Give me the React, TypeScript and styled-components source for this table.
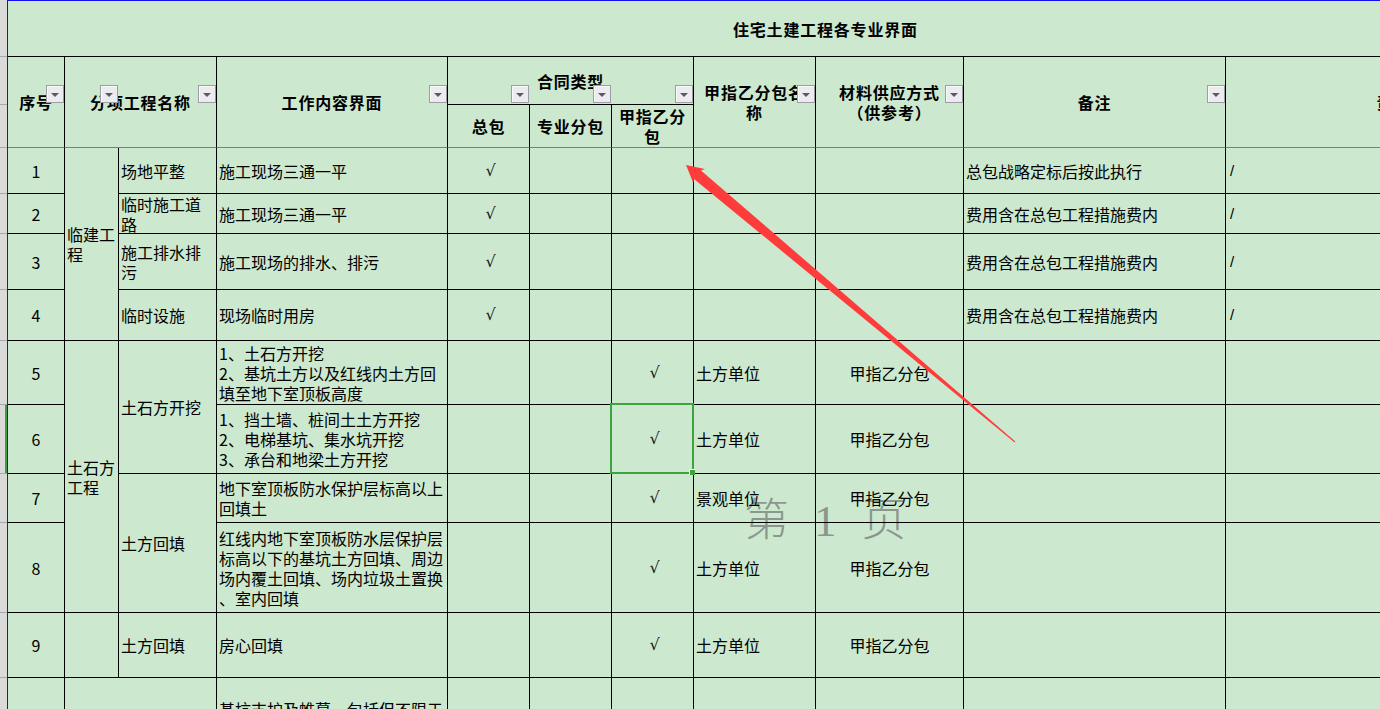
import React from "react";
import styled, { createGlobalStyle } from "styled-components";

const GlobalStyle = createGlobalStyle`
  html, body { margin: 0; padding: 0; background: #cce8cf; overflow: hidden; }
  body { font-family: "Noto Sans CJK SC", "Noto Sans", sans-serif; color: #000; }
  #root { width: 1380px; height: 709px; overflow: hidden; }
`;

const COLS = [57, 54, 98, 231, 82, 82, 82, 122, 148, 262, 369];
const ROWS = [56, 48, 43, 46, 40, 56, 51, 64, 69, 49, 90, 65, 102];
const SHEET_LEFT = 8;
const colStarts: number[] = [];
{
  let acc = SHEET_LEFT;
  COLS.forEach((w) => {
    colStarts.push(acc);
    acc += w;
  });
  colStarts.push(acc);
}

const Page = styled.div`
  position: relative;
  display: flex;
  align-items: flex-start;
  width: 1380px;
  height: 709px;
  overflow: hidden;
  background: #cce8cf;
`;

const RowHeaders = styled.div`
  flex: none;
  width: 7px;
  display: grid;
  grid-template-rows: ${[ROWS[0] + 1, ...ROWS.slice(1)].map((h) => `${h}px`).join(" ")};
  background: #dadada;
`;

const RowTick = styled.div<{ $active?: boolean }>`
  box-sizing: border-box;
  border-bottom: 1px solid #a8a8a8;
  box-shadow: ${(p) => (p.$active ? "inset -2px 0 0 #3f9d3f" : "none")};
`;

const Sheet = styled.div`
  flex: none;
  display: grid;
  grid-template-columns: ${COLS.map((w) => `${w}px`).join(" ")};
  grid-template-rows: ${ROWS.map((h) => `${h}px`).join(" ")};
  border-left: 1px solid #1010f0;
  border-top: 1px solid #1010f0;
`;

const GridCell = styled.div<{ $r: number; $c: number; $rs: number; $cs: number }>`
  grid-row: ${(p) => p.$r} / span ${(p) => p.$rs};
  grid-column: ${(p) => p.$c} / span ${(p) => p.$cs};
  position: relative;
  box-sizing: border-box;
  min-width: 0;
  min-height: 0;
  display: flex;
  align-items: center;
  white-space: pre;
  font-size: 16px;
  line-height: 20px;
`;

const TitleCell = styled(GridCell)`
  border-bottom: 1px solid #000;
  padding-left: 725px;
  font-weight: 700;
  letter-spacing: 0.8px;
`;

const HeaderCell = styled(GridCell)<{ $freeze?: boolean }>`
  justify-content: center;
  text-align: center;
  border-right: 1px solid #000;
  border-bottom: 1px solid ${(p) => (p.$freeze ? "#4ba04b" : "#000")};
  font-weight: 700;
  letter-spacing: 0.8px;
`;

const BodyCell = styled(GridCell)<{ $center?: boolean }>`
  justify-content: ${(p) => (p.$center ? "center" : "flex-start")};
  text-align: ${(p) => (p.$center ? "center" : "left")};
  border-right: 1px solid #000;
  border-bottom: 1px solid #000;
  padding: 0 2px;
`;

const Check = styled.span`
  font-family: "DejaVu Sans", sans-serif;
  font-size: 16px;
  line-height: 16px;
  font-weight: 400;
  color: #111;
  transform: translateX(2px);
`;

const Slash = styled.span`
  font-family: "Liberation Sans", sans-serif;
  font-size: 15px;
  padding-left: 2px;
`;

const FilterButton = styled.span<{ $left: number }>`
  position: absolute;
  top: 28px;
  left: ${(p) => p.$left}px;
  z-index: 2;
  width: 18px;
  height: 18px;
  box-sizing: border-box;
  border: 1px solid #9d9da6;
  background: #ececf0;
  box-shadow: inset 1px 1px 0 #fafafa;
  display: flex;
  align-items: center;
  justify-content: center;
  &::after {
    content: "";
    margin-top: 1px;
    border-left: 4px solid transparent;
    border-right: 4px solid transparent;
    border-top: 4px solid #5a5a62;
  }
`;

const Selection = styled.div`
  position: absolute;
  left: -2px;
  top: -2px;
  right: -1px;
  bottom: -1px;
  z-index: 3;
  border: 2px solid #3ca43c;
  pointer-events: none;
`;

const FillHandle = styled.span`
  position: absolute;
  right: -3px;
  bottom: -3px;
  width: 6px;
  height: 6px;
  box-sizing: border-box;
  background: #3ca43c;
  border-left: 1px solid #fff;
  border-top: 1px solid #fff;
`;

const Watermark = styled.div`
  position: absolute;
  left: 744px;
  top: 499px;
  display: flex;
  gap: 25px;
  font-family: "Liberation Serif", "Noto Sans CJK SC", serif;
  font-size: 45px;
  line-height: 45px;
  font-weight: 300;
  color: rgba(95, 95, 95, 0.6);
  pointer-events: none;
`;

const ArrowLayer = styled.svg`
  position: absolute;
  left: 0;
  top: 0;
  z-index: 5;
  pointer-events: none;
`;

type Header = { r: number; c: number; rs: number; cs: number; text: string; freeze?: boolean; filters?: boolean };

const headers: Header[] = [
  { r: 2, c: 1, rs: 2, cs: 1, text: "序号", freeze: true, filters: true },
  { r: 2, c: 2, rs: 2, cs: 2, text: "分项工程名称", freeze: true, filters: true },
  { r: 2, c: 4, rs: 2, cs: 1, text: "工作内容界面", freeze: true, filters: true },
  { r: 2, c: 5, rs: 1, cs: 3, text: "合同类型", filters: true },
  { r: 3, c: 5, rs: 1, cs: 1, text: "总包", freeze: true },
  { r: 3, c: 6, rs: 1, cs: 1, text: "专业分包", freeze: true },
  { r: 3, c: 7, rs: 1, cs: 1, text: "甲指乙分\n包", freeze: true },
  { r: 2, c: 8, rs: 2, cs: 1, text: "甲指乙分包名\n称", freeze: true, filters: true },
  { r: 2, c: 9, rs: 2, cs: 1, text: "材料供应方式\n（供参考）", freeze: true, filters: true },
  { r: 2, c: 10, rs: 2, cs: 1, text: "备注", freeze: true, filters: true },
  { r: 2, c: 11, rs: 2, cs: 1, text: "责任界面", freeze: true, filters: true },
];

type Body = { r: number; c: number; rs?: number; cs?: number; text?: string; center?: boolean; check?: boolean; slash?: boolean; selected?: boolean };

const CHECK = "√";
const FEE = "费用含在总包工程措施费内";

const rowsData: Body[][] = [
  [
    { r: 1, c: 1, text: "1", center: true },
    { r: 1, c: 2, rs: 4, text: "临建工\n程" },
    { r: 1, c: 3, text: "场地平整" },
    { r: 1, c: 4, text: "施工现场三通一平" },
    { r: 1, c: 5, check: true },
    { r: 1, c: 6 },
    { r: 1, c: 7 },
    { r: 1, c: 8 },
    { r: 1, c: 9 },
    { r: 1, c: 10, text: "总包战略定标后按此执行" },
    { r: 1, c: 11, slash: true },
  ],
  [
    { r: 2, c: 1, text: "2", center: true },
    { r: 2, c: 3, text: "临时施工道\n路" },
    { r: 2, c: 4, text: "施工现场三通一平" },
    { r: 2, c: 5, check: true },
    { r: 2, c: 6 },
    { r: 2, c: 7 },
    { r: 2, c: 8 },
    { r: 2, c: 9 },
    { r: 2, c: 10, text: FEE },
    { r: 2, c: 11, slash: true },
  ],
  [
    { r: 3, c: 1, text: "3", center: true },
    { r: 3, c: 3, text: "施工排水排\n污" },
    { r: 3, c: 4, text: "施工现场的排水、排污" },
    { r: 3, c: 5, check: true },
    { r: 3, c: 6 },
    { r: 3, c: 7 },
    { r: 3, c: 8 },
    { r: 3, c: 9 },
    { r: 3, c: 10, text: FEE },
    { r: 3, c: 11, slash: true },
  ],
  [
    { r: 4, c: 1, text: "4", center: true },
    { r: 4, c: 3, text: "临时设施" },
    { r: 4, c: 4, text: "现场临时用房" },
    { r: 4, c: 5, check: true },
    { r: 4, c: 6 },
    { r: 4, c: 7 },
    { r: 4, c: 8 },
    { r: 4, c: 9 },
    { r: 4, c: 10, text: FEE },
    { r: 4, c: 11, slash: true },
  ],
  [
    { r: 5, c: 1, text: "5", center: true },
    { r: 5, c: 2, rs: 4, text: "土石方\n工程" },
    { r: 5, c: 3, rs: 2, text: "土石方开挖" },
    { r: 5, c: 4, text: "1、土石方开挖\n2、基坑土方以及红线内土方回\n填至地下室顶板高度" },
    { r: 5, c: 5 },
    { r: 5, c: 6 },
    { r: 5, c: 7, check: true },
    { r: 5, c: 8, text: "土方单位" },
    { r: 5, c: 9, text: "甲指乙分包", center: true },
    { r: 5, c: 10 },
    { r: 5, c: 11 },
  ],
  [
    { r: 6, c: 1, text: "6", center: true },
    { r: 6, c: 4, text: "1、挡土墙、桩间土土方开挖\n2、电梯基坑、集水坑开挖\n3、承台和地梁土方开挖" },
    { r: 6, c: 5 },
    { r: 6, c: 6 },
    { r: 6, c: 7, check: true, selected: true },
    { r: 6, c: 8, text: "土方单位" },
    { r: 6, c: 9, text: "甲指乙分包", center: true },
    { r: 6, c: 10 },
    { r: 6, c: 11 },
  ],
  [
    { r: 7, c: 1, text: "7", center: true },
    { r: 7, c: 3, rs: 2, text: "土方回填" },
    { r: 7, c: 4, text: "地下室顶板防水保护层标高以上\n回填土" },
    { r: 7, c: 5 },
    { r: 7, c: 6 },
    { r: 7, c: 7, check: true },
    { r: 7, c: 8, text: "景观单位" },
    { r: 7, c: 9, text: "甲指乙分包", center: true },
    { r: 7, c: 10 },
    { r: 7, c: 11 },
  ],
  [
    { r: 8, c: 1, text: "8", center: true },
    {
      r: 8,
      c: 4,
      text: "红线内地下室顶板防水层保护层\n标高以下的基坑土方回填、周边\n场内覆土回填、场内垃圾土置换\n、室内回填",
    },
    { r: 8, c: 5 },
    { r: 8, c: 6 },
    { r: 8, c: 7, check: true },
    { r: 8, c: 8, text: "土方单位" },
    { r: 8, c: 9, text: "甲指乙分包", center: true },
    { r: 8, c: 10 },
    { r: 8, c: 11 },
  ],
  [
    { r: 9, c: 1, text: "9", center: true },
    { r: 9, c: 2 },
    { r: 9, c: 3, text: "土方回填" },
    { r: 9, c: 4, text: "房心回填" },
    { r: 9, c: 5 },
    { r: 9, c: 6 },
    { r: 9, c: 7, check: true },
    { r: 9, c: 8, text: "土方单位" },
    { r: 9, c: 9, text: "甲指乙分包", center: true },
    { r: 9, c: 10 },
    { r: 9, c: 11 },
  ],
  [
    { r: 10, c: 1 },
    { r: 10, c: 2, cs: 2 },
    { r: 10, c: 4, text: "基坑支护及帷幕，包括但不限于\n锚杆、土钉墙、支护桩、止水\n帷幕等" },
    { r: 10, c: 5 },
    { r: 10, c: 6 },
    { r: 10, c: 7 },
    { r: 10, c: 8 },
    { r: 10, c: 9 },
    { r: 10, c: 10 },
    { r: 10, c: 11 },
  ],
];

function filterOffsets(c: number, cs: number): number[] {
  const out: number[] = [];
  for (let k = c; k < c + cs; k++) {
    out.push(colStarts[k] - colStarts[c - 1] - 19);
  }
  return out;
}

const RedArrow: React.FC = () => (
  <ArrowLayer width={1380} height={709} viewBox="0 0 1380 709">
    <polygon
      points="686,165 704.8,169 701,170.5 1015.3,441.6 1014.7,442.4 694,178.9 693.2,182.8"
      fill="#ff3c3c"
    />
  </ArrowLayer>
);

export default function App() {
  const tickHeights = [ROWS[0] + 1, ...ROWS.slice(1)];
  return (
    <>
      <GlobalStyle />
      <Page>
        <RowHeaders>
          {tickHeights.map((_, i) => (
            <RowTick key={i} $active={i === 8} />
          ))}
        </RowHeaders>
        <Watermark>
          <span>第</span>
          <span>1</span>
          <span>页</span>
        </Watermark>
        <Sheet>
          <TitleCell $r={1} $c={1} $rs={1} $cs={11}>
            住宅土建工程各专业界面
          </TitleCell>
          {headers.map((h) => (
            <HeaderCell key={`h-${h.r}-${h.c}`} $r={h.r} $c={h.c} $rs={h.rs} $cs={h.cs} $freeze={h.freeze}>
              {h.text}
              {h.filters && filterOffsets(h.c, h.cs).map((x) => <FilterButton key={x} $left={x} />)}
            </HeaderCell>
          ))}
          {rowsData.flat().map((b) => (
            <BodyCell
              key={`b-${b.r}-${b.c}`}
              $r={b.r + 3}
              $c={b.c}
              $rs={b.rs ?? 1}
              $cs={b.cs ?? 1}
              $center={b.center || b.check}
            >
              {b.text}
              {b.check && <Check>{CHECK}</Check>}
              {b.slash && <Slash>/</Slash>}
              {b.selected && (
                <Selection>
                  <FillHandle />
                </Selection>
              )}
            </BodyCell>
          ))}
        </Sheet>
        <RedArrow />
      </Page>
    </>
  );
}
